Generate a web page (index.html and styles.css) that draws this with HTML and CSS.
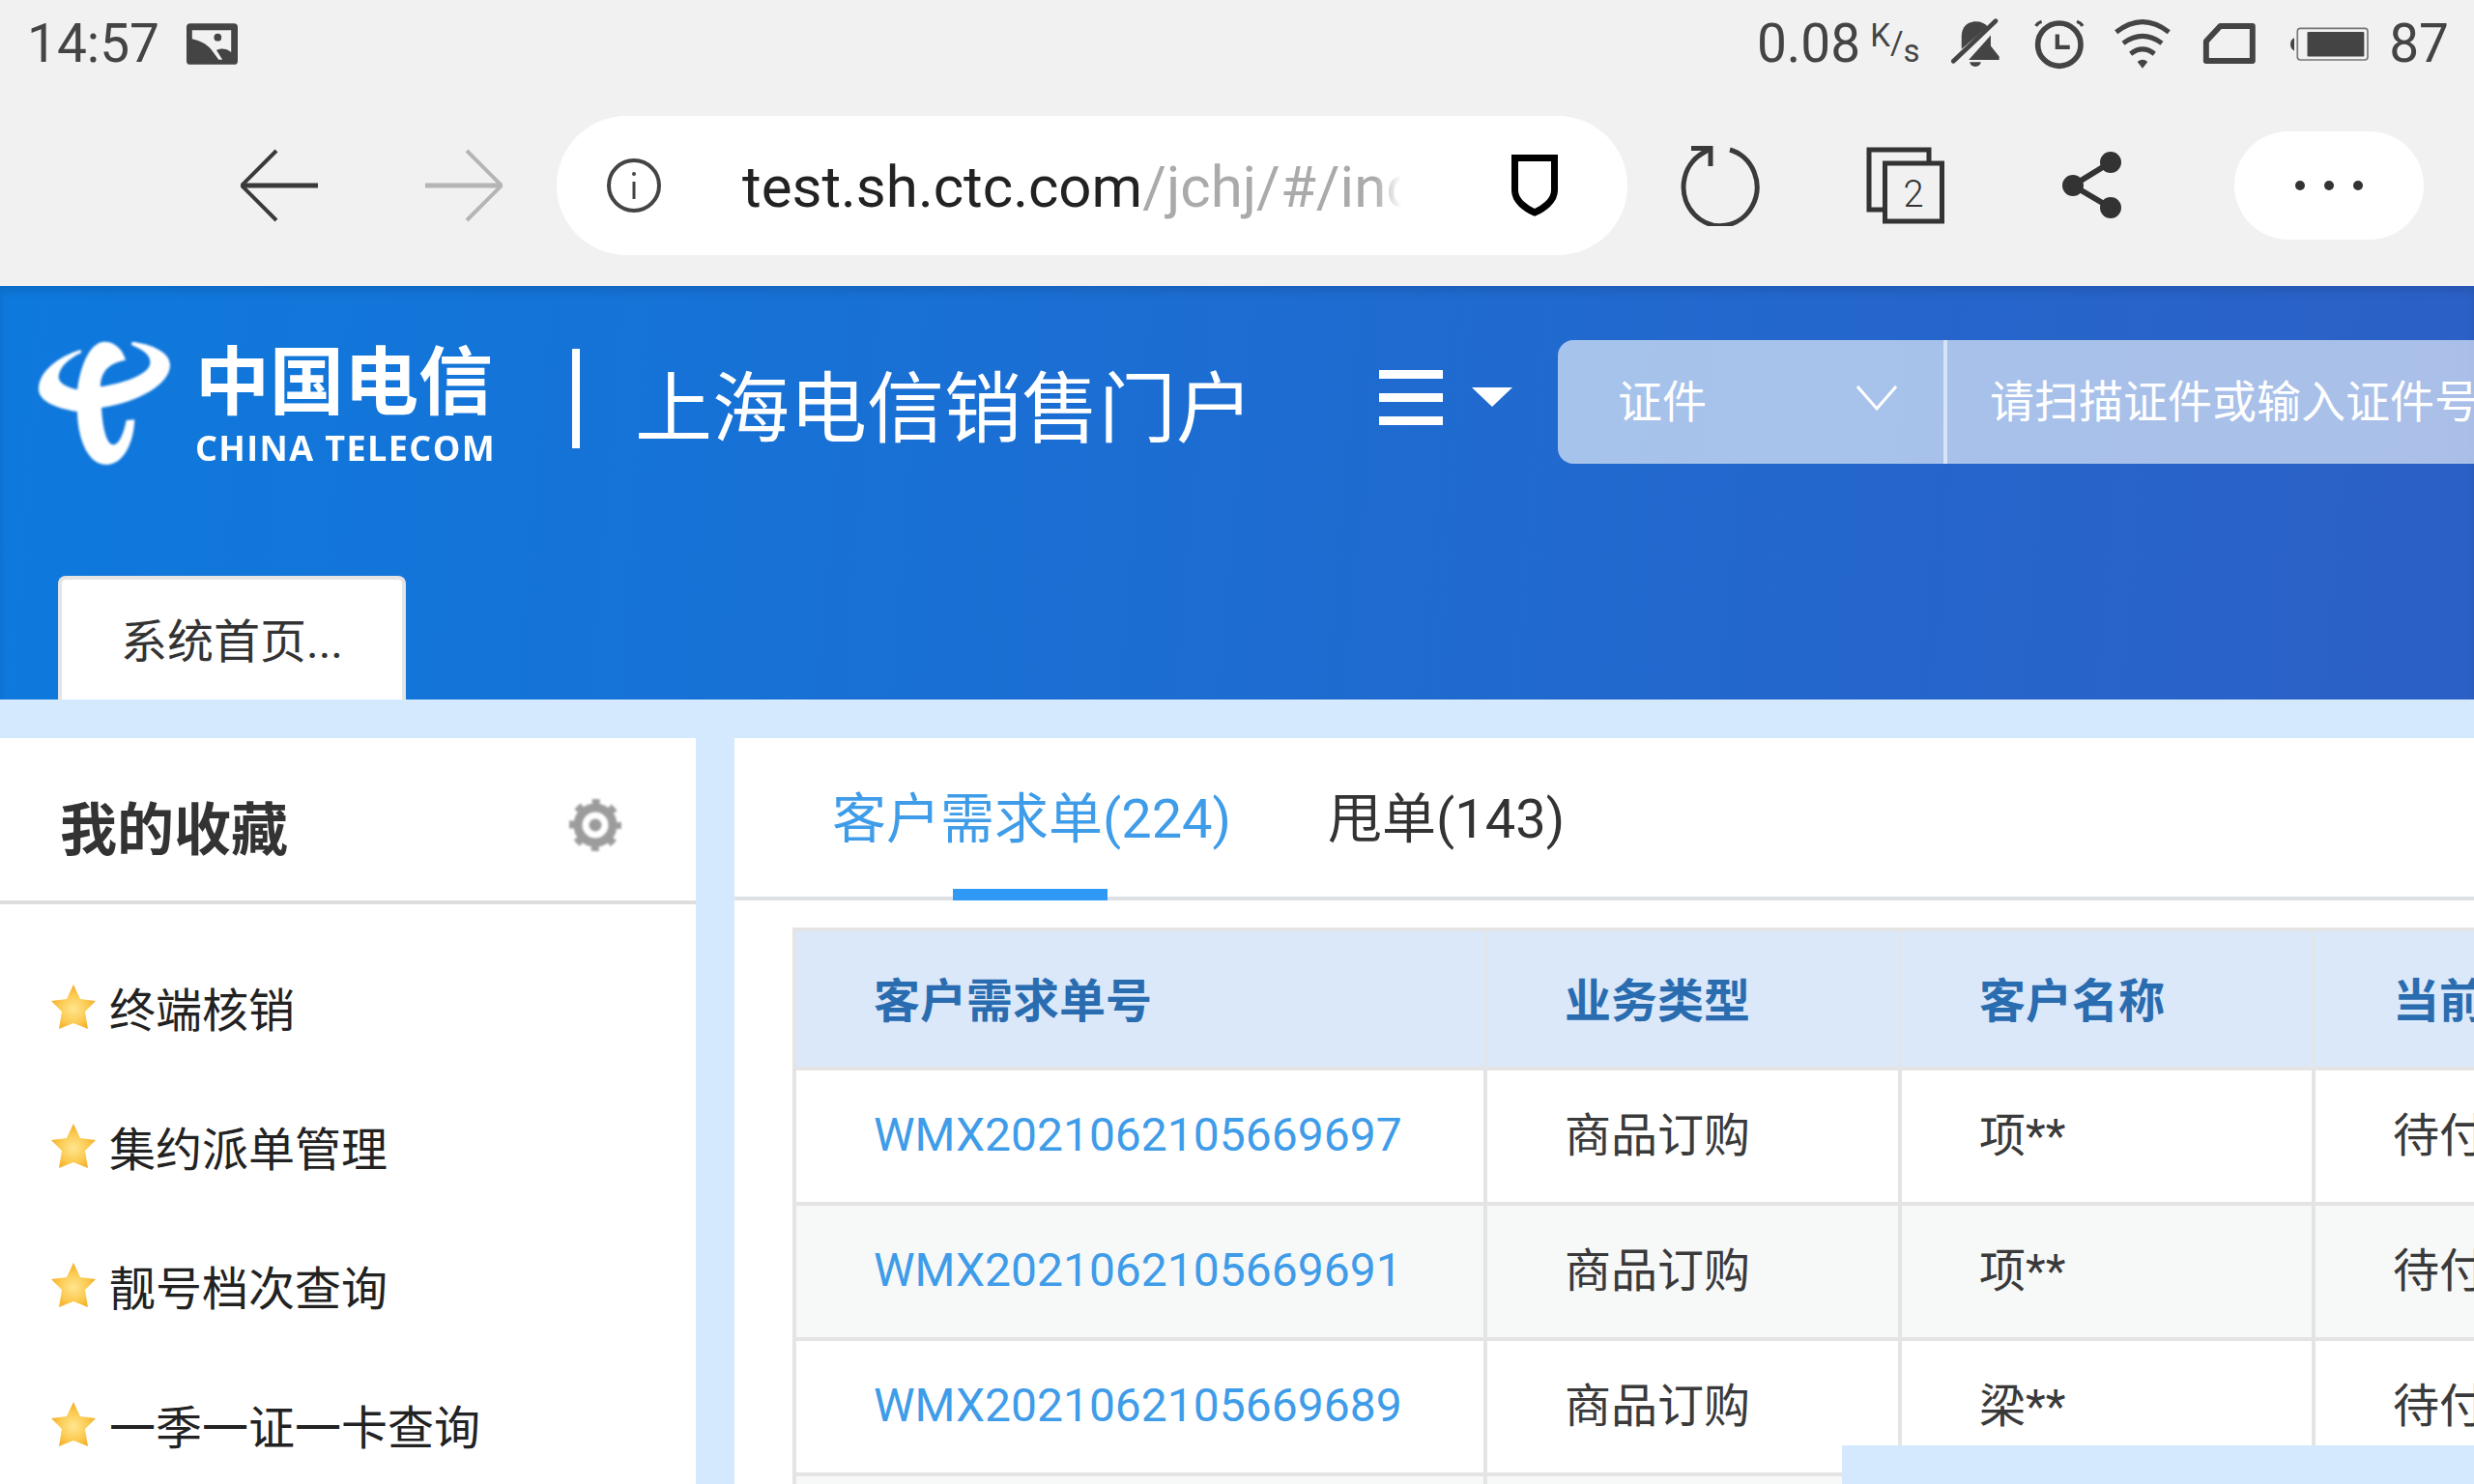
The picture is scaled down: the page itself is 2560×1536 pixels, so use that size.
FILE: index.html
```html
<!DOCTYPE html>
<html lang="zh-CN">
<head>
  <meta charset="UTF-8">
  <meta name="viewport" content="width=device-width, initial-scale=1.0">
  <title>上海电信销售门户</title>
  <link rel="stylesheet" href="styles.css">
</head>
<body>
  <svg class="defs" width="0" height="0">
    <defs>
      <radialGradient id="star-fill" cx="50%" cy="55%" r="55%">
        <stop offset="0%" stop-color="#ffe68f"/>
        <stop offset="60%" stop-color="#fbc94f"/>
        <stop offset="100%" stop-color="#f3a924"/>
      </radialGradient>
      <symbol id="star" viewBox="0 0 48 48">
        <path d="M24 1 L31 16 L47 18 L36 29 L39 47 L24 41 L9 47 L12 29 L1 18 L17 16 Z" fill="url(#star-fill)"/>
      </symbol>
    </defs>
  </svg>

  <div class="browser">
    <div class="status-bar">
      <span class="clock">14:57</span>
      <svg class="ic-photo" viewBox="22 20 164 132" width="53" height="43">
        <rect x="22" y="20" width="164" height="132" rx="12" fill="#444"/>
        <path d="M40 42 H165 V112 C150 100 132 98 118 106 L137 136 H125 L100 102 C85 85 62 75 40 70 Z" fill="#f1f1f1"/>
        <circle cx="122" cy="65" r="12" fill="#444"/>
      </svg>
      <span class="speed">0.08</span>
      <span class="speed-unit"><i class="u-k">K</i><i class="u-s">/</i><i class="u-b">s</i></span>
      <svg class="ic-bell" viewBox="25 20 155 155" width="52" height="52">
        <path d="M60 115 L60 75 C60 45 80 30 105 30 C120 30 132 36 140 45 Z" fill="#444"/>
        <path d="M150 72 L150 105 L176 138 L176 148 L82 148 Z" fill="#444"/>
        <path d="M85 155 A18 18 0 0 0 120 155 Z" fill="#444"/>
        <path d="M35 152 L165 28" stroke="#444" stroke-width="14" stroke-linecap="round"/>
      </svg>
      <svg class="ic-alarm" viewBox="270 15 175 170" width="58" height="57" fill="none" stroke="#444">
        <circle cx="357" cy="102" r="67" stroke-width="17"/>
        <path d="M351 70 V110 H390" stroke-width="13"/>
        <path d="M284 44 Q290 34 302 30 M430 44 Q424 34 412 30" stroke-width="10"/>
      </svg>
      <svg class="ic-wifi" viewBox="520 20 195 165" width="65" height="55" fill="none" stroke="#444" stroke-width="15">
        <path d="M534 66 Q616 2 698 66"/>
        <path d="M556 100 Q616 56 676 100"/>
        <path d="M579 133 Q616 104 653 133"/>
        <path d="M600 158 Q616 144 632 158 L616 178 Z" fill="#444" stroke="none"/>
      </svg>
      <svg class="ic-sim" viewBox="800 35 168 133" width="56" height="44" fill="none">
        <path d="M855 47 H956 V156 H811 V95 Z" stroke="#444" stroke-width="18" stroke-linejoin="round"/>
      </svg>
      <svg class="ic-battery" viewBox="1070 45 252 112" width="84" height="37">
        <rect x="1097" y="52" width="220" height="99" rx="9" fill="none" stroke="#777" stroke-width="5"/>
        <rect x="1128" y="63" width="178" height="77" rx="3" fill="#444"/>
        <path d="M1087 82 V122 C1078 118 1075 110 1075 102 C1075 94 1078 86 1087 82 Z" fill="#444"/>
      </svg>
      <span class="level">87</span>
    </div>

    <div class="toolbar">
      <svg class="nav-back" viewBox="0 0 80 76" width="80" height="76" fill="none" stroke="#3a3a3a" stroke-width="4">
        <path d="M37 2 L1 38 L37 74"/>
        <path d="M2 38 H80" stroke-width="5"/>
      </svg>
      <svg class="nav-fwd" viewBox="0 0 80 76" width="80" height="76" fill="none" stroke="#b5b5b5" stroke-width="4">
        <path d="M43 2 L79 38 L43 74"/>
        <path d="M0 38 H78" stroke-width="5"/>
      </svg>
      <div class="url-pill">
        <svg class="ic-info" viewBox="0 0 60 60" width="60" height="60" fill="none" stroke="#444" stroke-width="4">
          <circle cx="30" cy="30" r="26"/>
          <path d="M30 26 V44" stroke-width="3"/>
          <circle cx="30" cy="18" r="2" fill="#444" stroke="none"/>
        </svg>
        <div class="url-text">test.sh.ctc.com<span>/jchj/#/index.html</span></div>
        <svg class="ic-shield" viewBox="0 0 48 64" width="48" height="64" fill="none" stroke="#000" stroke-width="7">
          <path d="M3.5 3.5 H44.5 V37 C44.5 48 33 56 24 60 C15 56 3.5 48 3.5 37 Z"/>
        </svg>
      </div>
      <svg class="ic-reload" viewBox="0 0 84 84" width="84" height="84" fill="none" stroke="#3a3a3a" stroke-width="5">
        <path d="M53 5 A38 40 0 1 1 24 9 L34 3"/>
        <path d="M13 3.5 H33 V22"/>
      </svg>
      <svg class="ic-tabs" viewBox="0 0 84 84" width="84" height="84" fill="none" stroke="#333" stroke-width="5">
        <path d="M66 17 V5 H4 V67 H18"/>
        <rect x="20.5" y="19" width="59" height="60"/>
        <text x="50" y="64" class="tab-count">2</text>
      </svg>
      <svg class="ic-share" viewBox="0 0 70 74" width="70" height="74" fill="#333" stroke="#333" stroke-width="6">
        <path d="M53 13 L14 37 L53 60" fill="none"/>
        <circle cx="53" cy="13" r="8"/>
        <circle cx="14" cy="37" r="8"/>
        <circle cx="53" cy="60" r="8"/>
      </svg>
      <div class="more-pill"><i></i><i></i><i></i></div>
    </div>
  </div>

  <div class="header">
    <div class="header-top">
      <svg class="emblem" viewBox="0 0 480 450" width="160" height="150">
        <path fill="#fff" d="M160 63 C90 85 30 130 30 185 C30 225 90 245 150 255 C150 320 175 420 240 420 C295 420 325 350 328 280 L302 282 C295 320 280 358 262 358 C240 358 228 300 225 243 C340 225 438 170 438 110 C438 70 380 45 320 38 L318 48 C360 65 382 85 375 110 C365 140 300 165 222 178 C222 140 240 105 300 95 C290 60 265 38 235 38 C190 38 160 110 150 187 C115 180 90 165 92 145 C95 115 125 90 163 72 Z"/>
      </svg>
      <div class="brand">
        <div class="brand-cn">中国电信</div>
        <div class="brand-en">CHINA TELECOM</div>
      </div>
      <div class="divider"></div>
      <div class="portal-title">上海电信销售门户</div>
      <div class="menu-btn">
        <div class="menu-bars"><i></i><i></i><i></i></div>
        <div class="menu-caret"></div>
      </div>
      <div class="search-box">
        <div class="search-type">
          <span>证件</span>
          <svg viewBox="0 0 42 26" width="42" height="26" fill="none" stroke="#fff" stroke-width="3"><path d="M1 1 L21 24 L41 1"/></svg>
        </div>
        <div class="search-input">请扫描证件或输入证件号</div>
      </div>
    </div>
    <div class="header-tabs">
      <div class="page-tab">系统首页...</div>
    </div>
  </div>

  <div class="content">
    <div class="sidebar">
      <div class="sidebar-head">
        <h2>我的收藏</h2>
        <svg class="ic-gear" viewBox="0 0 60 60" width="60" height="60" fill="none" stroke="#9c9c9c">
          <circle cx="30" cy="30" r="18" stroke-width="9"/>
          <circle cx="30" cy="30" r="24" stroke-width="6" stroke-dasharray="8 10.85" stroke-dashoffset="4"/>
          <circle cx="30" cy="30" r="6.5" fill="#9c9c9c" stroke="none"/>
        </svg>
      </div>
      <ul class="fav-list">
        <li><svg width="48" height="48"><use href="#star"/></svg>终端核销</li>
        <li><svg width="48" height="48"><use href="#star"/></svg>集约派单管理</li>
        <li><svg width="48" height="48"><use href="#star"/></svg>靓号档次查询</li>
        <li><svg width="48" height="48"><use href="#star"/></svg>一季一证一卡查询</li>
      </ul>
    </div>

    <div class="main">
      <div class="tab-bar">
        <div class="tab active">客户需求单(224)</div>
        <div class="tab">甩单(143)</div>
      </div>
      <table class="order-table">
        <colgroup>
          <col class="col-no"><col class="col-type"><col class="col-name"><col class="col-state">
        </colgroup>
        <thead>
          <tr><th>客户需求单号</th><th>业务类型</th><th>客户名称</th><th>当前状态</th></tr>
        </thead>
        <tbody>
          <tr><td><a>WMX2021062105669697</a></td><td>商品订购</td><td>项**</td><td>待付款</td></tr>
          <tr><td><a>WMX2021062105669691</a></td><td>商品订购</td><td>项**</td><td>待付款</td></tr>
          <tr><td><a>WMX2021062105669689</a></td><td>商品订购</td><td>梁**</td><td>待付款</td></tr>
          <tr><td><a>WMX2021062105669688</a></td><td>商品订购</td><td>梁**</td><td>待付款</td></tr>
        </tbody>
      </table>
    </div>
  </div>

  <div class="corner-band"></div>
</body>
</html>
```

FILE: styles.css
```css
* {
  box-sizing: border-box;
}

body {
  margin: 0;
  width: 2560px;
  height: 1536px;
  overflow: hidden;
  position: relative;
  font-family: Roboto, "Noto Sans CJK SC", sans-serif;
  color: #333;
  background-color: #d4e9fd;
}

i {
  font-style: normal;
}

svg {
  display: block;
  flex: none;
}

.defs {
  position: absolute;
}

/* browser chrome */
.browser {
  height: 296px;
  background-color: #f1f1f1;
}

.status-bar {
  height: 88px;
  display: flex;
  align-items: center;
  padding: 2px 26px 0 28px;
  font-size: 55px;
  color: #444;
}

.ic-photo {
  margin-left: 28px;
}

.speed {
  margin-left: auto;
}

.speed-unit {
  width: 50px;
  height: 48px;
  margin-left: 10px;
  display: flex;
  justify-content: space-between;
  font-size: 33px;
  line-height: 32px;
}

.u-k {
  align-self: flex-start;
}

.u-s {
  align-self: center;
}

.u-b {
  align-self: flex-end;
}

.ic-bell {
  margin-left: 33px;
}

.ic-alarm {
  margin-left: 32px;
}

.ic-wifi {
  margin-left: 25px;
}

.ic-sim {
  margin-left: 29px;
}

.ic-battery {
  margin-left: 33px;
}

.level {
  margin-left: 20px;
}

.toolbar {
  height: 208px;
  display: flex;
  align-items: center;
  padding-left: 249px;
}

.nav-fwd {
  margin-left: 111px;
}

.url-pill {
  width: 1108px;
  height: 144px;
  margin-left: 56px;
  padding-left: 50px;
  flex: none;
  display: flex;
  align-items: center;
  background-color: #fff;
  border-radius: 72px;
}

.url-text {
  width: 682px;
  margin-left: 82px;
  padding-top: 2px;
  overflow: hidden;
  white-space: nowrap;
  font-size: 60px;
  color: #222;
  -webkit-mask-image: linear-gradient(90deg, #000 96%, transparent);
  mask-image: linear-gradient(90deg, #000 96%, transparent);
}

.url-text span {
  color: #aaa;
}

.ic-shield {
  margin-left: 114px;
}

.ic-reload {
  margin-left: 53px;
}

.ic-tabs {
  margin-left: 109px;
}

.tab-count {
  font-size: 38px;
  font-weight: 300;
  fill: #333;
  stroke: none;
  text-anchor: middle;
  font-family: Roboto, sans-serif;
}

.ic-share {
  margin-left: 117px;
}

.more-pill {
  width: 196px;
  height: 112px;
  margin-left: 111px;
  flex: none;
  display: flex;
  align-items: center;
  justify-content: center;
  gap: 20px;
  background-color: #fff;
  border-radius: 56px;
}

.more-pill i {
  width: 10px;
  height: 10px;
  background-color: #333;
  border-radius: 50%;
}

/* blue header */
.header {
  height: 428px;
  display: flex;
  flex-direction: column;
  justify-content: space-between;
  background: linear-gradient(95deg, #0e79dd, #2c60c6);
  box-shadow: inset 0 6px 8px rgba(0, 0, 0, 0.1);
}

.header-top {
  height: 128px;
  margin-top: 56px;
  padding-left: 30px;
  display: flex;
  align-items: center;
  color: #fff;
}

.header-top > * {
  flex: none;
}

.emblem {
  filter: blur(0.8px);
}

.brand {
  width: 310px;
  margin-left: 12px;
  font-weight: 700;
  filter: blur(0.7px);
}

.brand-cn {
  font-size: 77px;
  line-height: 92px;
  white-space: nowrap;
}

.brand-en {
  margin-top: 3px;
  font-family: "Open Sans", sans-serif;
  font-size: 36px;
  line-height: 36px;
  letter-spacing: 1.4px;
  white-space: nowrap;
}

.divider {
  width: 8px;
  height: 103px;
  margin: 0 0 8px 80px;
  background-color: #fff;
}

.portal-title {
  width: 640px;
  margin: 16px 0 0 57px;
  font-size: 80px;
  line-height: 100px;
  white-space: nowrap;
}

.menu-btn {
  margin-left: 130px;
  margin-bottom: 10px;
  display: flex;
  align-items: center;
}

.menu-bars {
  width: 66px;
  display: flex;
  flex-direction: column;
  gap: 15px;
}

.menu-bars i {
  height: 9px;
  background-color: #fff;
}

.menu-caret {
  margin-left: 30px;
  border-left: 21px solid transparent;
  border-right: 21px solid transparent;
  border-top: 20px solid #fff;
}

.search-box {
  width: 1000px;
  height: 128px;
  margin-left: 47px;
  display: flex;
  background-color: rgba(255, 255, 255, 0.6);
  border-radius: 16px 0 0 16px;
  font-size: 46px;
  color: #fff;
}

.search-type {
  width: 403px;
  padding: 0 48px 8px 62px;
  display: flex;
  align-items: center;
  justify-content: space-between;
  border-right: 4px solid rgba(255, 255, 255, 0.55);
}

.search-input {
  padding: 0 0 8px 44px;
  display: flex;
  align-items: center;
  white-space: nowrap;
}

.header-tabs {
  padding-left: 60px;
}

.page-tab {
  width: 360px;
  height: 128px;
  padding: 0 0 4px 61px;
  display: flex;
  align-items: center;
  background-color: #fff;
  border: 4px solid #e4e4e4;
  border-bottom: 0;
  border-radius: 8px 8px 0 0;
  font-size: 48px;
}

/* page body */
.content {
  height: 812px;
  padding-top: 40px;
  display: flex;
  gap: 40px;
  overflow: hidden;
}

.sidebar {
  width: 720px;
  flex: none;
  background-color: #fff;
}

.sidebar-head {
  height: 172px;
  padding: 12px 74px 0 62px;
  display: flex;
  align-items: center;
  justify-content: space-between;
  border-bottom: 4px solid #ddd;
}

.sidebar-head h2 {
  margin: 0;
  font-size: 59px;
  font-weight: 700;
}

.ic-gear {
  filter: blur(1px);
}

.fav-list {
  margin: 0;
  padding: 34px 0 0 52px;
  list-style: none;
}

.fav-list li {
  height: 144px;
  display: flex;
  align-items: center;
  gap: 13px;
  font-size: 48px;
  color: #222;
}

.main {
  flex: 1;
  min-width: 0;
  background-color: #fff;
  overflow: hidden;
}

.tab-bar {
  height: 168px;
  padding: 4px 0 0 101px;
  display: flex;
  align-items: center;
  gap: 100px;
  border-bottom: 4px solid #dde1e4;
  font-size: 56px;
  line-height: 80px;
}

.tab {
  position: relative;
}

.tab.active {
  color: #3f9ce8;
}

.tab.active::after {
  content: "";
  position: absolute;
  left: 50%;
  bottom: -44px;
  width: 160px;
  height: 12px;
  margin-left: -82px;
  background-color: #2f99f5;
}

.order-table {
  width: 1976px;
  margin: 28px 0 0 60px;
  table-layout: fixed;
  border-collapse: separate;
  border-spacing: 0;
  border-top: 4px solid #e4e4e4;
  border-left: 4px solid #e4e4e4;
  font-size: 48px;
}

.col-no {
  width: 715px;
}

.col-type {
  width: 429px;
}

.col-name {
  width: 428px;
}

.col-state {
  width: 400px;
}

.order-table th,
.order-table td {
  padding: 0 0 10px 80px;
  text-align: left;
  white-space: nowrap;
  border-right: 4px solid #e4e4e4;
  border-bottom: 4px solid #e4e4e4;
}

.order-table th {
  height: 144px;
  padding-bottom: 4px;
  background-color: #dbe8f9;
  color: #2a6cb0;
  font-weight: 700;
  border-right-color: #e0e6ee;
}

.order-table td {
  height: 140px;
  color: #3a3a3a;
}

.order-table tbody tr:nth-child(even) td {
  background-color: #f7f8f8;
}

.order-table a {
  display: block;
  margin-top: 6px;
  color: #3f9ce8;
}

.corner-band {
  position: absolute;
  right: 0;
  bottom: 0;
  width: 654px;
  height: 40px;
  background-color: #d4e9fd;
}
```
